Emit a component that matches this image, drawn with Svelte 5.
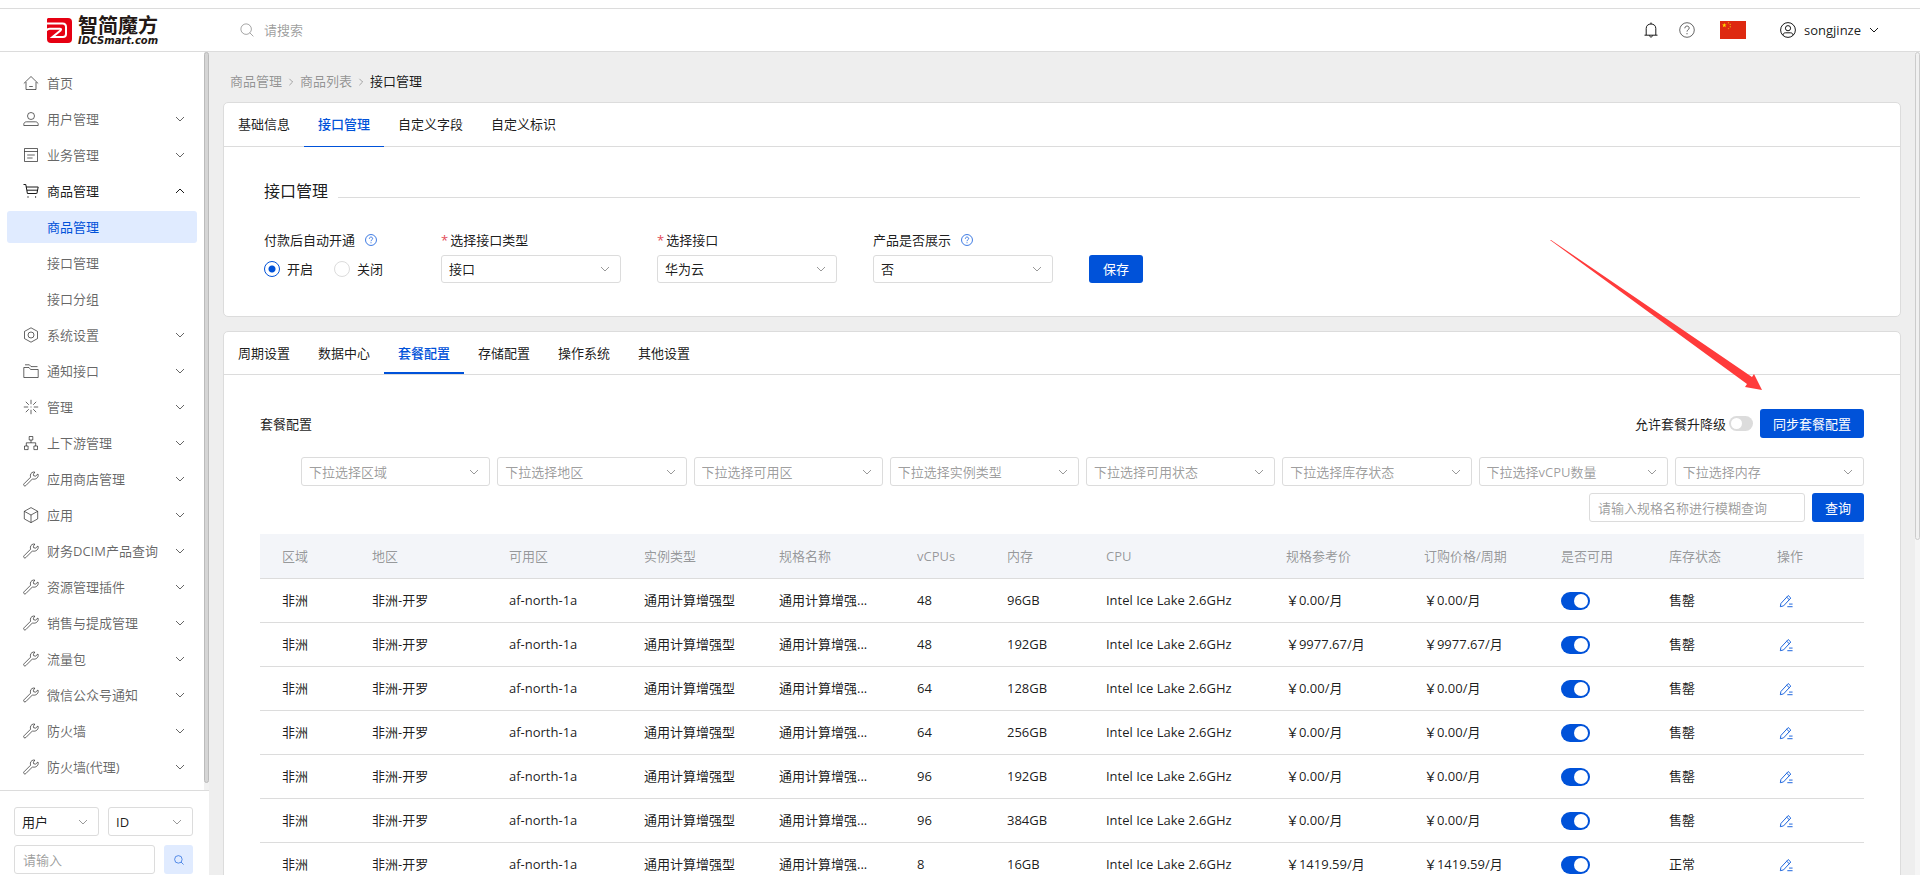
<script lang="ts">
  type MenuItem = { icon: string; text: string; children?: string[]; leaf?: boolean };

  const menu: MenuItem[] = [
    { icon: 'home', text: '首页', leaf: true },
    { icon: 'user', text: '用户管理' },
    { icon: 'list', text: '业务管理' },
    { icon: 'cart', text: '商品管理', children: ['商品管理', '接口管理', '接口分组'] },
    { icon: 'setting', text: '系统设置' },
    { icon: 'folder', text: '通知接口' },
    { icon: 'spark', text: '管理' },
    { icon: 'tree', text: '上下游管理' },
    { icon: 'tool', text: '应用商店管理' },
    { icon: 'box', text: '应用' },
    { icon: 'tool', text: '财务DCIM产品查询' },
    { icon: 'tool', text: '资源管理插件' },
    { icon: 'tool', text: '销售与提成管理' },
    { icon: 'tool', text: '流量包' },
    { icon: 'tool', text: '微信公众号通知' },
    { icon: 'tool', text: '防火墙' },
    { icon: 'tool', text: '防火墙(代理)' }
  ];

  const icons: Record<string, string> = {
    home: 'M.8 8.500 8 1.500l7.200 7M3 7v7.500h10V7M6.200 11.500h3.600',
    user: 'M8 1.5a3.500 3.500 0 1 1 0 7 3.500 3.500 0 0 1 0-7ZM.8 14.500v-1.200c0-1.400 1.200-2.500 2.700-2.500h9c1.500 0 2.700 1.100 2.700 2.500v1.200Z',
    list: 'M1.5 1.500h13v13h-13ZM1.5 4.500h13M4.2 8h7.600M4.200 11h5.400',
    cart: 'M.5 1.500h2.300l1.600 9h9.300M3.200 4h12l-1.300 6.500M4 7.200h10.500M5 13.300v1.400M12.600 13.300v1.400',
    setting: 'M8 .8l6.500 3.600v7.200L8 15.200l-6.500-3.600V4.400ZM8 5a3 3 0 1 1 0 6 3 3 0 0 1 0-6Z',
    folder: 'M.8 4.500h5.200l1.600 2h7.600v8H.8ZM2 1.800h4.400L8 3.600h6.500',
    spark: 'M8 .8v4.400M8 10.800v4.400M.8 8h4.400M10.800 8h4.400M2.800 2.800l3 3M10.200 10.200l3 3M13.200 2.800l-3 3M5.800 10.200l-3 3M7.500 8h1',
    tree: 'M6.200 1.500h3.600V5H6.200ZM1.500 11h3.600v3.600H1.500ZM10.900 11h3.600v3.600h-3.600ZM8 5v2.800M3.300 11V7.800h9.400V11',
    tool: 'M11.8 1.100c-1.900-.5-4.200.8-4.400 3-.1.800 0 1.400.3 2L1 12.800c-.5.5-.5 1.300 0 1.800s1.300.5 1.800 0l6.700-6.700c2.500 1 5.700-.8 5.700-3.500 0-.6-.1-1-.3-1.400l-2.300 2.100-1.900-.3-.3-1.600Z',
    box: 'M8 .6l6.700 3.700v7.600L8 15.600l-6.700-3.700V4.300ZM1.300 4.300 8 8l6.700-3.700M8 8v7.600'
  };

  const filters = [
    '下拉选择区域',
    '下拉选择地区',
    '下拉选择可用区',
    '下拉选择实例类型',
    '下拉选择可用状态',
    '下拉选择库存状态',
    '下拉选择vCPU数量',
    '下拉选择内存'
  ];

  const columns = [
    { title: '区域', width: 90 },
    { title: '地区', width: 137 },
    { title: '可用区', width: 135 },
    { title: '实例类型', width: 135 },
    { title: '规格名称', width: 138 },
    { title: 'vCPUs', width: 90 },
    { title: '内存', width: 99 },
    { title: 'CPU', width: 180 },
    { title: '规格参考价', width: 138 },
    { title: '订购价格/周期', width: 137 },
    { title: '是否可用', width: 108 },
    { title: '库存状态', width: 108 },
    { title: '操作', width: 109 }
  ];
  const totalWidth = columns.reduce((sum, c) => sum + c.width, 0);

  let rows = $state([
    { cpus: 48, memory: '96GB', price: '0.00', stock: '售罄', enabled: true },
    { cpus: 48, memory: '192GB', price: '9977.67', stock: '售罄', enabled: true },
    { cpus: 64, memory: '128GB', price: '0.00', stock: '售罄', enabled: true },
    { cpus: 64, memory: '256GB', price: '0.00', stock: '售罄', enabled: true },
    { cpus: 96, memory: '192GB', price: '0.00', stock: '售罄', enabled: true },
    { cpus: 96, memory: '384GB', price: '0.00', stock: '售罄', enabled: true },
    { cpus: 8, memory: '16GB', price: '1419.59', stock: '正常', enabled: true }
  ]);

  const pageTabs = ['基础信息', '接口管理', '自定义字段', '自定义标识'];
  const configTabs = ['周期设置', '数据中心', '套餐配置', '存储配置', '操作系统', '其他设置'];
  let pageTab = $state('接口管理');
  let configTab = $state('套餐配置');
  let openMenu = $state('商品管理');
  let autoOpen = $state('on');
  let allowUpgrade = $state(false);
</script>

{#snippet chevron()}
  <svg class="chevron" viewBox="0 0 10 10" aria-hidden="true"><path d="M1 3l4 4 4-4" /></svg>
{/snippet}

{#snippet help()}
  <svg class="help" viewBox="0 0 16 16" aria-hidden="true">
    <circle cx="8" cy="8" r="7.300" />
    <path d="M5.800 6.300c0-3 4.400-2.900 4.400-.2 0 1.700-2.200 1.600-2.200 3.500M8 11v1.300" />
  </svg>
{/snippet}

{#snippet lens()}
  <svg class="lens" viewBox="0 0 16 16" aria-hidden="true">
    <circle cx="7" cy="7" r="6" />
    <path d="M11.300 11.300l4 4" />
  </svg>
{/snippet}

<div class="page">
  <header>
    <a class="logo" href="#home" aria-label="智简魔方">
      <svg viewBox="0 0 25 25" aria-hidden="true">
        <path fill="#e60012" d="M1 0h20q4 0 4 4v17q0 4-4 4H4q-4 0-4-4V1Z" />
        <path
          fill="none"
          stroke="#fff"
          stroke-width="2"
          d="M0 5.500h15.500q3.500 0 3.500 3.500v7q0 3-3 3H5.500l8-6.500q1.500-1.800-.8-1.800H3q-3 0-3 2"
        />
      </svg>
      <span class="brand">
        <strong>智简魔方</strong>
        <em>IDCSmart.com</em>
      </span>
    </a>
    <label class="search">
      {@render lens()}
      <input type="text" placeholder="请搜索" aria-label="搜索" />
    </label>
    <div class="tools">
      <button class="plain" aria-label="通知">
        <svg class="bell" viewBox="0 0 16 16">
          <path d="M3.200 13V6.500C3.200 3.500 5.300 2 8 2s4.800 1.500 4.800 4.500V13M1.500 13.200h13M6.500 13.500c0 2 3 2 3 0M8 .5V2" />
        </svg>
      </button>
      <button class="plain ask" aria-label="帮助">{@render help()}</button>
      <button class="plain" aria-label="语言">
        <svg class="flag" viewBox="0 0 26 18">
          <rect width="26" height="18" fill="#de2910" />
          <path fill="#ffde00" d="M4.300 2l.6 1.600h1.700l-1.400 1 .6 1.700-1.500-1-1.500 1 .6-1.700-1.400-1h1.700Z" />
          <g fill="#e8a010">
            <circle cx="8.500" cy="1.800" r=".7" />
            <circle cx="10.300" cy="3.400" r=".7" />
            <circle cx="10.300" cy="5.800" r=".7" />
            <circle cx="8.500" cy="7.600" r=".7" />
          </g>
        </svg>
      </button>
      <button class="plain account">
        <svg class="avatar" viewBox="0 0 16 16">
          <circle cx="8" cy="8" r="7.400" />
          <circle cx="8" cy="6.200" r="2.600" />
          <path d="M3 13.200c0-1.600 1.200-2.400 2.500-2.400h5c1.300 0 2.500.8 2.500 2.400" />
        </svg>
        songjinze
        {@render chevron()}
      </button>
    </div>
  </header>

  <div class="body">
    <aside>
      <div class="menu-wrap">
        <nav>
          {#each menu as item}
            <button
              class="item"
              class:open={openMenu === item.text}
              onclick={() => (openMenu = openMenu === item.text ? '' : item.text)}
            >
              <svg class="icon" viewBox="0 0 16 16"><path d={icons[item.icon]} /></svg>
              <span>{item.text}</span>
              {#if !item.leaf}{@render chevron()}{/if}
            </button>
            {#if item.children && openMenu === item.text}
              {#each item.children as child, i}
                <a class="sub" class:active={i === 0} href="#{child}">{child}</a>
              {/each}
            {/if}
          {/each}
        </nav>
        <div class="track"><div class="thumb"></div></div>
      </div>
      <div class="quick">
        <div class="select">
          <select aria-label="类型"><option>用户</option></select>
          {@render chevron()}
        </div>
        <div class="select">
          <select aria-label="字段"><option>ID</option></select>
          {@render chevron()}
        </div>
        <div class="find">
          <input class="field" type="text" placeholder="请输入" aria-label="关键字" />
          <button aria-label="搜索">{@render lens()}</button>
        </div>
      </div>
    </aside>

    <main>
      <div class="crumbs">
        <a href="#goods">商品管理</a>{@render chevron()}
        <a href="#list">商品列表</a>{@render chevron()}
        <span>接口管理</span>
      </div>

      <section class="card">
        <div class="tabs">
          {#each pageTabs as tab}
            <button class:active={pageTab === tab} onclick={() => (pageTab = tab)}>{tab}</button>
          {/each}
        </div>
        <div class="settings">
          <h2>接口管理</h2>
          <form class="form" onsubmit={(e) => e.preventDefault()}>
            <div class="group auto" role="radiogroup" aria-labelledby="auto-label">
              <span class="label" id="auto-label">付款后自动开通{@render help()}</span>
              <div class="radios">
                <label><input type="radio" name="auto" value="on" bind:group={autoOpen} />开启</label>
                <label><input type="radio" name="auto" value="off" bind:group={autoOpen} />关闭</label>
              </div>
            </div>
            <div class="group">
              <label class="label" for="kind"><i>*</i>选择接口类型</label>
              <div class="select"><select id="kind"><option>接口</option></select>{@render chevron()}</div>
            </div>
            <div class="group">
              <label class="label" for="api"><i>*</i>选择接口</label>
              <div class="select"><select id="api"><option>华为云</option></select>{@render chevron()}</div>
            </div>
            <div class="group">
              <label class="label" for="show">产品是否展示{@render help()}</label>
              <div class="select"><select id="show"><option>否</option></select>{@render chevron()}</div>
            </div>
            <button class="primary">保存</button>
          </form>
        </div>
      </section>

      <section class="card config">
        <div class="tabs thick">
          {#each configTabs as tab}
            <button class:active={configTab === tab} onclick={() => (configTab = tab)}>{tab}</button>
          {/each}
        </div>
        <div class="content">
          <div class="bar">
            <h3>套餐配置</h3>
            <label class="allow">
              允许套餐升降级
              <input class="switch small" type="checkbox" bind:checked={allowUpgrade} />
            </label>
            <button class="primary">同步套餐配置</button>
          </div>
          <div class="filters">
            {#each filters as text}
              <div class="select muted">
                <select aria-label={text}><option>{text}</option></select>
                {@render chevron()}
              </div>
            {/each}
          </div>
          <div class="query">
            <input class="field" type="text" placeholder="请输入规格名称进行模糊查询" aria-label="规格名称" />
            <button class="primary">查询</button>
          </div>
          <table>
            <colgroup>
              {#each columns as col}
                <col style="width: {(col.width / totalWidth) * 100}%" />
              {/each}
            </colgroup>
            <thead>
              <tr>
                {#each columns as col}<th>{col.title}</th>{/each}
              </tr>
            </thead>
            <tbody>
              {#each rows as row}
                <tr>
                  <td>非洲</td>
                  <td>非洲-开罗</td>
                  <td>af-north-1a</td>
                  <td>通用计算增强型</td>
                  <td>通用计算增强...</td>
                  <td>{row.cpus}</td>
                  <td>{row.memory}</td>
                  <td>Intel Ice Lake 2.6GHz</td>
                  <td>￥{row.price}/月</td>
                  <td>￥{row.price}/月</td>
                  <td><input class="switch" type="checkbox" aria-label="是否可用" bind:checked={row.enabled} /></td>
                  <td>{row.stock}</td>
                  <td>
                    <button class="plain edit" aria-label="编辑">
                      <svg viewBox="0 0 16 16">
                        <path d="M1.500 14.500l.7-3.700 8.300-9 3 2.800-8.300 9ZM8.800 3.700l3 2.800M9.500 14.500h6M11.500 11.500h4" />
                      </svg>
                    </button>
                  </td>
                </tr>
              {/each}
            </tbody>
          </table>
        </div>
      </section>
    </main>
    <div class="track page-track"><div class="thumb"></div></div>
  </div>

  <svg class="pointer" viewBox="0 0 212 150" aria-hidden="true">
    <polygon points="0,0 1,0 202,137 204,134 212,150 195,147 197,144" />
  </svg>
</div>

<style>
  :global(body) {
    margin: 0;
  }

  .page {
    position: relative;
    display: flex;
    flex-direction: column;
    height: 100vh;
    overflow: hidden;
    background: #fff;
    color: rgba(0, 0, 0, 0.9);
    font: 13px/20px 'Open Sans', 'Noto Sans CJK SC', sans-serif;
  }

  .page *,
  .page {
    box-sizing: border-box;
  }

  button,
  input,
  select {
    margin: 0;
    font: inherit;
    color: inherit;
  }

  button {
    padding: 0;
    border: none;
    cursor: pointer;
  }

  a {
    color: inherit;
    text-decoration: none;
  }

  input::placeholder {
    color: rgba(0, 0, 0, 0.4);
    opacity: 1;
  }

  svg {
    display: block;
    flex: none;
    fill: none;
    stroke: currentColor;
  }

  .chevron {
    width: 10px;
    height: 10px;
  }

  .help {
    width: 12px;
    height: 12px;
  }

  .lens {
    width: 14px;
    height: 14px;
  }

  .plain {
    background: none;
  }

  header {
    display: flex;
    align-items: center;
    flex: none;
    height: 44px;
    margin-top: 8px;
    padding: 0 41px 0 47px;
    border-top: 1px solid #dcdcdc;
    border-bottom: 1px solid #dcdcdc;
  }

  .logo {
    display: flex;
    align-items: center;
    gap: 6px;
    width: 193px;
  }

  .logo svg {
    width: 25px;
    height: 25px;
    stroke: none;
  }

  .brand {
    display: flex;
    flex-direction: column;
    color: #231815;
  }

  .brand strong {
    font-size: 20px;
    line-height: 21px;
    font-weight: 700;
  }

  .brand em {
    font: italic bold 10px/10px 'DejaVu Sans', sans-serif;
  }

  .search {
    display: flex;
    align-items: center;
    gap: 10px;
    color: rgba(0, 0, 0, 0.4);
  }

  .search input {
    width: 200px;
    padding: 0;
    border: none;
    outline: none;
  }

  .tools {
    display: flex;
    align-items: center;
    margin-left: auto;
  }

  .tools > button {
    display: flex;
    align-items: center;
  }

  .bell,
  .avatar,
  .ask .help {
    width: 16px;
    height: 16px;
  }

  .ask {
    margin: 0 25px 0 20px;
    color: rgba(0, 0, 0, 0.6);
  }

  .flag {
    width: 26px;
    height: 18px;
    stroke: none;
  }

  .account {
    gap: 8px;
    margin-left: 34px;
  }

  .body {
    display: flex;
    flex: 1;
    min-height: 0;
  }

  aside {
    display: flex;
    flex-direction: column;
    flex: none;
    width: 209px;
  }

  .menu-wrap {
    display: flex;
    flex: 1;
    min-height: 0;
    border-bottom: 1px solid #dcdcdc;
  }

  nav {
    display: flex;
    flex-direction: column;
    flex: 1;
    gap: 4px;
    padding: 15px 7px 0;
    overflow: hidden;
  }

  .item,
  .sub {
    display: flex;
    align-items: center;
    flex: none;
    height: 32px;
    border-radius: 3px;
    color: rgba(0, 0, 0, 0.6);
  }

  .item {
    gap: 8px;
    padding: 0 12px 0 16px;
    background: none;
  }

  .item .chevron {
    margin-left: auto;
  }

  .item.open {
    color: rgba(0, 0, 0, 0.9);
  }

  .item.open .chevron {
    transform: rotate(180deg);
  }

  .icon {
    width: 16px;
    height: 16px;
  }

  .sub {
    padding-left: 40px;
  }

  .sub.active {
    background: #e0ebff;
    color: #0052d9;
  }

  .track {
    flex: none;
    width: 5px;
    background: #f1f1f1;
  }

  .thumb {
    height: 99%;
    border: 1px solid #bbb;
    border-radius: 3px;
    background: #d5d5d5;
  }

  .page-track {
    background: #f5f5f5;
  }

  .page-track .thumb {
    height: 488px;
    border-color: #ccc;
    background: #f1f1f1;
  }

  .quick {
    display: grid;
    grid-template-columns: 1fr 1fr;
    gap: 9px;
    padding: 16px 16px 1px 14px;
  }

  .quick .select,
  .quick .field {
    height: 29px;
  }

  .find {
    display: flex;
    grid-column: span 2;
    gap: 9px;
  }

  .find .field {
    flex: 1;
    min-width: 0;
  }

  .find button {
    display: grid;
    place-items: center;
    width: 29px;
    border-radius: 3px;
    background: #e0ebff;
    color: #0052d9;
  }

  .find .lens {
    width: 10px;
    height: 10px;
  }

  .select {
    display: grid;
    align-items: center;
  }

  .select > :global(*) {
    grid-area: 1 / 1;
  }

  .select select {
    width: 100%;
    height: 100%;
    padding: 0 24px 0 7px;
    border: 1px solid #dcdcdc;
    border-radius: 3px;
    outline: none;
    appearance: none;
    background: #fff;
  }

  .select .chevron {
    justify-self: end;
    margin-right: 11px;
    color: rgba(0, 0, 0, 0.4);
    pointer-events: none;
  }

  .select.muted select {
    color: rgba(0, 0, 0, 0.4);
  }

  .field {
    padding: 0 8px;
    border: 1px solid #dcdcdc;
    border-radius: 3px;
    outline: none;
  }

  main {
    display: flex;
    flex-direction: column;
    flex: 1;
    min-width: 0;
    padding: 0 14px;
    overflow: hidden;
    background: #eee;
  }

  .crumbs {
    display: flex;
    align-items: center;
    flex: none;
    gap: 5px;
    height: 50px;
    padding: 7px 7px 0;
    color: rgba(0, 0, 0, 0.4);
  }

  .crumbs .chevron {
    width: 8px;
    height: 8px;
    margin-top: 2px;
    transform: rotate(-90deg);
  }

  .crumbs span {
    color: rgba(0, 0, 0, 0.9);
  }

  .card {
    flex: none;
    border: 1px solid #dcdcdc;
    border-radius: 5px;
    background: #fff;
  }

  .config {
    margin-top: 14px;
  }

  .tabs {
    display: flex;
    height: 44px;
    border-bottom: 1px solid #dcdcdc;
  }

  .tabs button {
    height: 44px;
    padding: 0 14px 2px;
    border-bottom: 1px solid transparent;
    background: none;
  }

  .tabs .active {
    border-bottom-color: #0052d9;
    color: #0052d9;
    font-weight: 500;
  }

  .tabs.thick {
    height: 43px;
  }

  .tabs.thick button {
    height: 42px;
    padding: 2px 14px 0;
    border-bottom-width: 2px;
  }

  .settings {
    padding: 32px 40px 33px;
  }

  h2,
  h3 {
    margin: 0;
    font-weight: 400;
  }

  h2 {
    display: flex;
    align-items: center;
    gap: 10px;
    font-size: 16px;
    line-height: 24px;
  }

  h2::after {
    content: '';
    flex: 1;
    height: 1px;
    margin-top: 12px;
    background: #dcdcdc;
  }

  h3 {
    font-size: 13px;
  }

  .form {
    display: flex;
    align-items: flex-end;
    gap: 36px;
    margin-top: 27px;
  }

  .group {
    width: 180px;
  }

  .group.auto {
    width: 141px;
  }

  .group .select,
  .radios {
    height: 28px;
  }

  .label {
    display: flex;
    align-items: center;
    height: 20px;
    margin-bottom: 5px;
  }

  .label i {
    margin-right: 2px;
    color: #e34d59;
    font-style: normal;
  }

  .label .help {
    margin-left: 10px;
    color: #0052d9;
  }

  .radios {
    display: flex;
    align-items: center;
    gap: 21px;
  }

  .radios label {
    display: flex;
    align-items: center;
    gap: 7px;
  }

  .radios input {
    width: 16px;
    height: 16px;
    border: 1px solid #dcdcdc;
    border-radius: 50%;
    appearance: none;
  }

  .radios input:checked {
    border-color: #0052d9;
    background: radial-gradient(#0052d9 3px, transparent 4px);
  }

  .primary {
    height: 29px;
    padding: 0 13px;
    border-radius: 3px;
    background: #0052d9;
    color: #fff;
  }

  .form .primary {
    height: 28px;
    padding: 0 14px;
  }

  .content {
    padding: 34px 36px;
  }

  .bar {
    display: flex;
    align-items: center;
  }

  .allow {
    display: flex;
    align-items: center;
    gap: 3px;
    margin: 0 7px 0 auto;
  }

  .filters {
    display: flex;
    gap: 7px;
    margin: 19px 0 7px 41px;
  }

  .filters .select {
    flex: 1;
    height: 29px;
  }

  .query {
    display: flex;
    justify-content: flex-end;
    gap: 7px;
    margin-bottom: 12px;
  }

  .query .field {
    width: 216px;
  }

  table {
    width: 100%;
    border-collapse: collapse;
    table-layout: fixed;
  }

  th,
  td {
    height: 44px;
    padding: 0 0 0 22px;
    border-bottom: 1px solid #dcdcdc;
    text-align: left;
    font-weight: 400;
    white-space: nowrap;
  }

  th {
    background: #f3f5f9;
    color: rgba(0, 0, 0, 0.4);
  }

  td .switch,
  .edit {
    margin-top: 2px;
  }

  .switch {
    display: block;
    width: 29px;
    height: 18px;
    padding: 2px;
    border-radius: 9px;
    appearance: none;
    background: #dcdcdc;
    cursor: pointer;
  }

  .switch::before {
    content: '';
    display: block;
    width: 14px;
    height: 14px;
    border-radius: 50%;
    background: #fff;
  }

  .switch:checked {
    background: #0052d9;
  }

  .switch:checked::before {
    margin-left: auto;
  }

  .switch.small {
    width: 24px;
    height: 15px;
  }

  .switch.small::before {
    width: 11px;
    height: 11px;
  }

  .edit {
    display: block;
    padding-left: 2px;
    color: #0052d9;
  }

  .edit svg {
    width: 14px;
    height: 14px;
  }

  .pointer {
    position: absolute;
    top: 240px;
    right: 158px;
    width: 212px;
    height: 150px;
    fill: #ff3b3b;
    stroke: none;
    pointer-events: none;
  }
</style>
